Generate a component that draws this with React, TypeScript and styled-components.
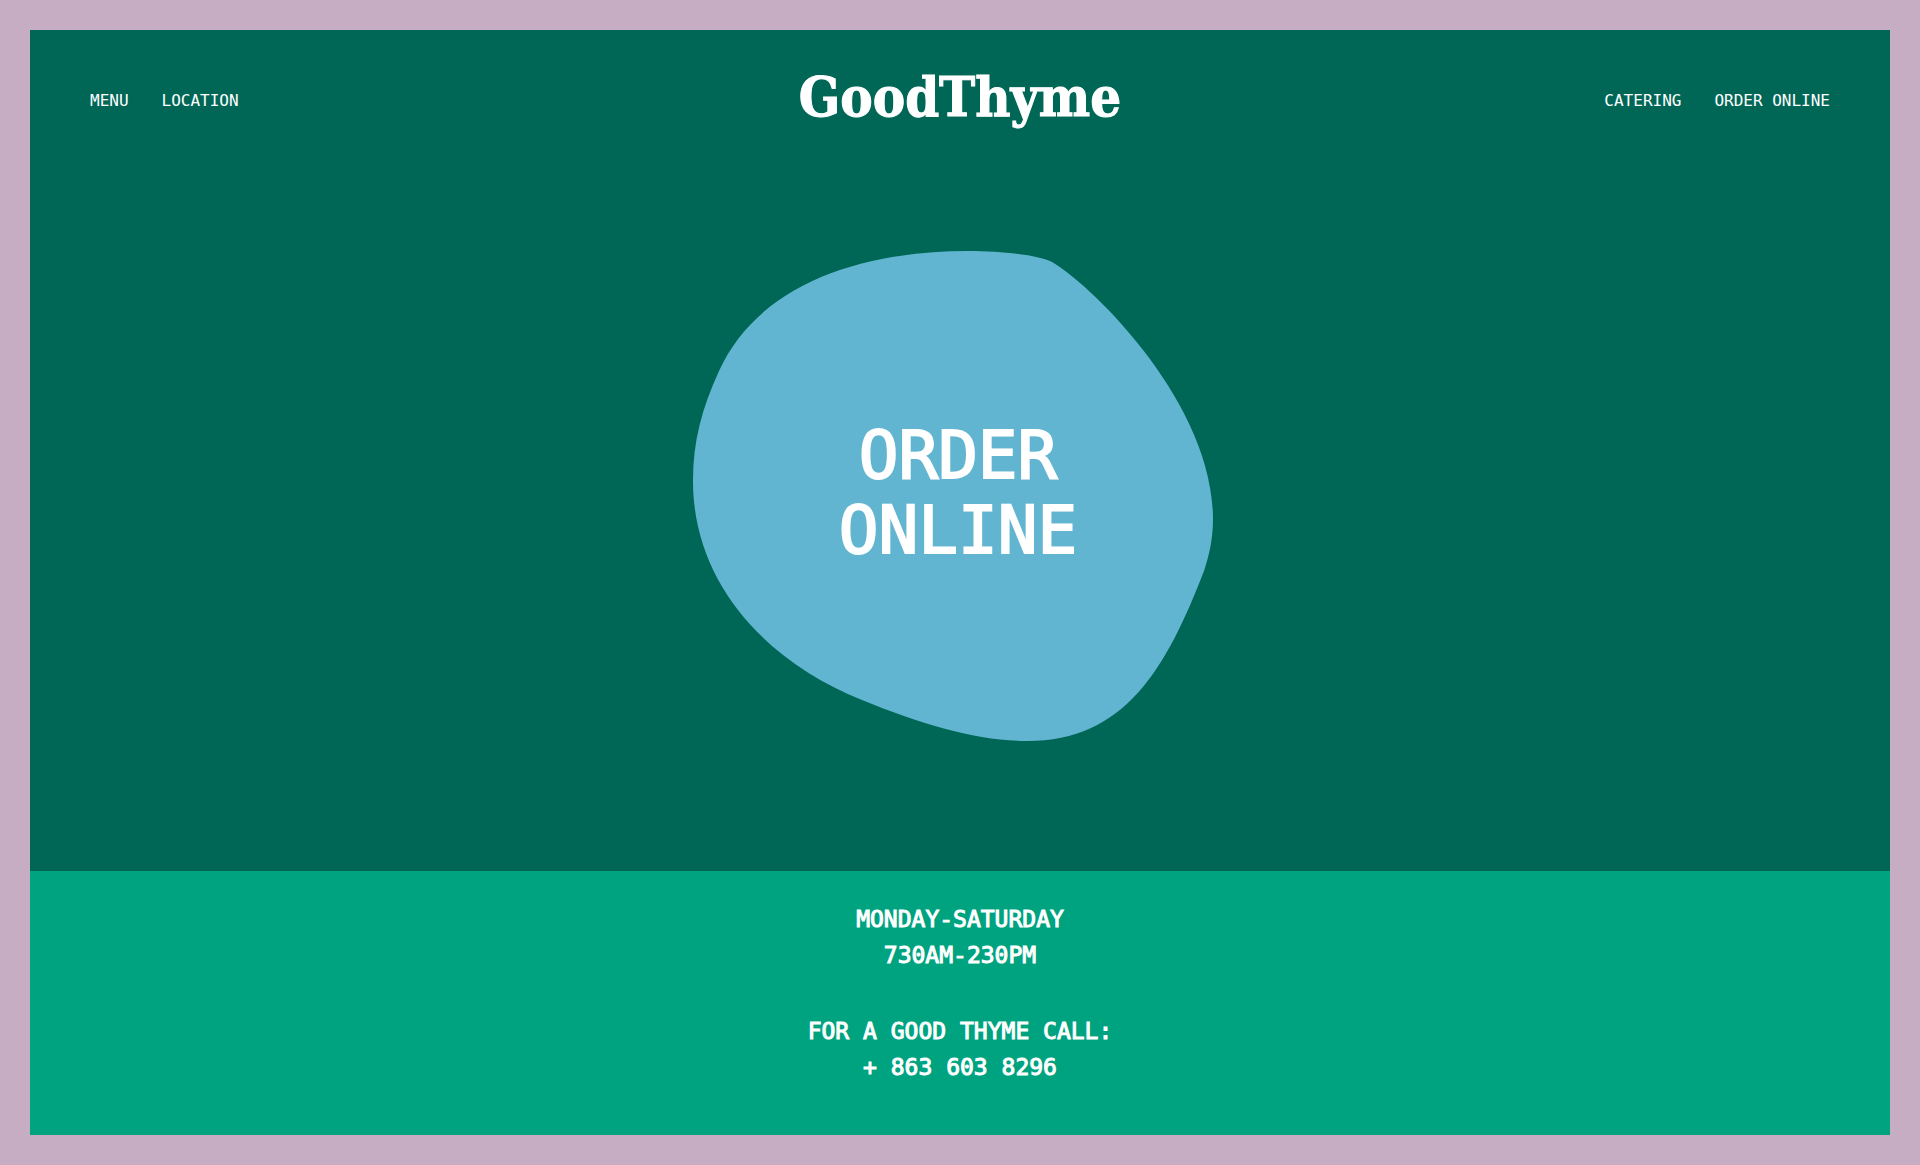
import React from "react";
import styled, { createGlobalStyle } from "styled-components";

const color = {
  lilac: "#c6adc3",
  forest: "#006757",
  mint: "#00a380",
  sky: "#61b5d0",
  white: "#ffffff",
};

const GlobalStyle = createGlobalStyle`
  *, *::before, *::after { box-sizing: border-box; }
  body {
    margin: 0;
    background: ${color.lilac};
    color: ${color.white};
    font-family: "DejaVu Sans Mono", "Liberation Mono", monospace;
  }
`;

const Frame = styled.div`
  display: flex;
  flex-direction: column;
  min-height: 100vh;
  padding: 30px;
`;

const Hero = styled.main`
  flex: 1;
  background: ${color.forest};
`;

const Header = styled.header`
  display: grid;
  grid-template-columns: 1fr auto 1fr;
  align-items: center;
  padding: 40px 60px;
`;

const Nav = styled.nav<{ $end?: boolean }>`
  display: flex;
  gap: 33px;
  justify-content: ${(p) => (p.$end ? "flex-end" : "flex-start")};
`;

const NavLink = styled.a`
  color: inherit;
  font-size: 16px;
  line-height: 24px;
  text-decoration: none;
`;

const Logo = styled.a`
  padding-bottom: 8px;
  color: inherit;
  font-family: "DejaVu Serif Condensed", "DejaVu Serif", serif;
  font-size: 54px;
  font-weight: 700;
  line-height: 54px;
  text-decoration: none;
  -webkit-text-stroke: 1px currentColor;
`;

const Stage = styled.section`
  display: flex;
  justify-content: center;
  padding: 79px 0 128px;
`;

const OrderLink = styled.a`
  display: grid;
  place-items: center;
  color: inherit;
  text-decoration: none;

  > * {
    grid-area: 1 / 1;
  }
`;

const Blob = styled.svg`
  display: block;
  width: 534px;
  height: 492px;
  fill: ${color.sky};
`;

const OrderLabel = styled.span`
  width: min-content;
  padding: 0 4px 8px 0;
  font-size: 66px;
  line-height: 75px;
  text-align: center;
  -webkit-text-stroke: 2px currentColor;
`;

const Info = styled.footer`
  display: flex;
  flex-direction: column;
  gap: 40px;
  padding: 30px 30px 50px;
  background: ${color.mint};
  text-align: center;
`;

const InfoText = styled.p`
  margin: 0;
  font-size: 23px;
  line-height: 36px;
  -webkit-text-stroke: 1px currentColor;
`;

const leftLinks = ["MENU", "LOCATION"];
const rightLinks = ["CATERING", "ORDER ONLINE"];

export default function App() {
  return (
    <>
      <GlobalStyle />
      <Frame>
        <Hero>
          <Header>
            <Nav aria-label="Visit">
              {leftLinks.map((label) => (
                <NavLink key={label} href="#">{label}</NavLink>
              ))}
            </Nav>
            <Logo href="#">GoodThyme</Logo>
            <Nav $end aria-label="Order">
              {rightLinks.map((label) => (
                <NavLink key={label} href="#">{label}</NavLink>
              ))}
            </Nav>
          </Header>
          <Stage>
            <OrderLink href="#">
              <Blob viewBox="0 0 534 492" aria-hidden="true">
                <path d="M275 0C310 0 345 4 359 11C392 29 520 148 520 268C520 288 516 305 511 320C473 418 432 490 334 490C285 490 230 474 169 449C70 409 0 330 0 230C0 190 9 157 26 120C66 32 170 0 275 0Z" />
              </Blob>
              <OrderLabel>ORDER ONLINE</OrderLabel>
            </OrderLink>
          </Stage>
        </Hero>
        <Info>
          <InfoText>
            MONDAY-SATURDAY
            <br />
            730AM-230PM
          </InfoText>
          <InfoText>
            FOR A GOOD THYME CALL:
            <br />+ 863 603 8296
          </InfoText>
        </Info>
      </Frame>
    </>
  );
}
